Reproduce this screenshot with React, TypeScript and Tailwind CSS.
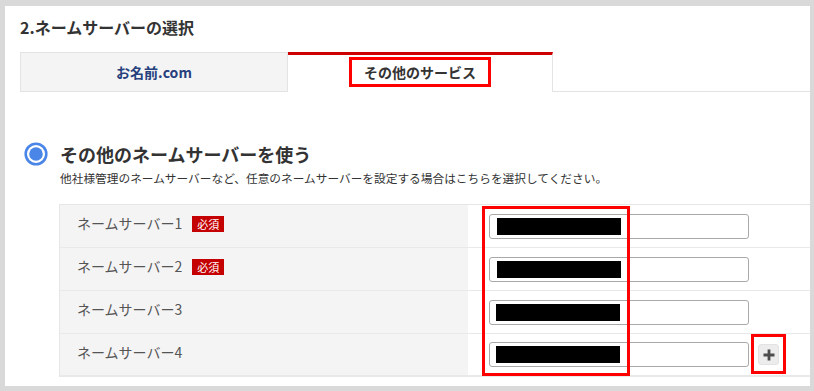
const JP = { fontFamily: '"Noto Sans CJK JP", "Noto Sans", sans-serif' };

const rows = [
  { label: 'ネームサーバー1', required: true, shift: 8 },
  { label: 'ネームサーバー2', required: true, shift: 8 },
  { label: 'ネームサーバー3', required: false, shift: 7 },
  { label: 'ネームサーバー4', required: false, shift: 7, add: true },
];

function Radio() {
  return (
    <svg width="24" height="24" viewBox="0 0 24 24" className="shrink-0">
      <circle cx="12" cy="12" r="10.3" fill="#fff" stroke="#4a86e8" strokeWidth="2.6" />
      <circle cx="12" cy="12" r="6.8" fill="#4a86e8" />
    </svg>
  );
}

function PlusMark() {
  return (
    <svg width="12" height="12" viewBox="0 0 12 12">
      <path d="M6 0.5V11.5M0.5 6H11.5" stroke="#4d4d4d" strokeWidth="2.8" />
    </svg>
  );
}

export default function App() {
  return (
    <div className="w-[814px] h-[391px] bg-[#d9d9d9] pt-[6px] pl-[5px] pr-[4px] pb-[5px]" style={JP}>
      <div className="bg-white h-full overflow-hidden">
        <div className="pl-[15px] pt-[9px] text-[16px] leading-[24px] font-bold text-[#333]">
          2.ネームサーバーの選択
        </div>

        {/* tabs */}
        <div className="flex mt-[13px] ml-[15px]">
          <div className="w-[268px] h-[40px] border border-[#e3e3e3] bg-[#f4f4f4] flex items-center justify-center text-[14px] font-bold text-[#263f7d]">
            お名前.com
          </div>
          <div className="relative w-[265px] h-[40px] border-t-[3px] border-t-[#cc0000] border-r border-[#e3e3e3] bg-white flex items-center justify-center text-[14px] font-bold text-[#333] pb-[3px]">
            その他のサービス
            <div className="absolute left-[61px] top-[2px] w-[142px] h-[30px] border-[3px] border-[#ff0000]" />
          </div>
          <div className="flex-1 border-b border-[#e3e3e3]" />
        </div>

        {/* radio heading */}
        <div className="flex items-center mt-[49px] ml-[19px] h-[26px]">
          <Radio />
          <span className="ml-[12px] text-[18px] leading-[26px] font-bold text-[#333]">
            その他のネームサーバーを使う
          </span>
        </div>
        <div className="ml-[55px] mt-[2px] text-[11.7px] leading-[18px] text-[#333]">
          他社様管理のネームサーバーなど、任意のネームサーバーを設定する場合はこちらを選択してください。
        </div>

        {/* name server table */}
        <div className="relative ml-[54px] mt-[17px] border-t border-l border-[#e6e6e6]">
          {rows.map((r, i) => (
            <div
              key={r.label}
              className={`flex h-[43px] border-[#e9e9e9] ${i === rows.length - 1 ? 'border-b-2' : 'border-b'}`}
            >
              <div className="w-[408px] bg-[#f4f4f4] pl-[17px] pt-[8px] flex items-start gap-[10px]">
                <span className="text-[14px] leading-[20px] text-[#555]">{r.label}</span>
                {r.required && (
                  <span className="mt-[3px] w-[32px] h-[16px] bg-[#c40000] text-white text-[11px] leading-[16px] text-center">
                    必須
                  </span>
                )}
              </div>
              <div className="flex-1 flex items-center pl-[21px]">
                <div className="w-[260px] h-[25px] border border-[#a9a9a9] rounded-[3px] flex items-center" style={{ paddingLeft: r.shift - 1 }}>
                  <div className="w-[124px] h-[17px] bg-black" />
                </div>
                {r.add && (
                  <div className="ml-[9px] w-[21px] h-[21px] rounded-[3px] bg-[#ececec] border border-[#e2e2e2] flex items-center justify-center">
                    <PlusMark />
                  </div>
                )}
              </div>
            </div>
          ))}
          <div className="absolute left-[422px] top-[1px] w-[148px] h-[170px] border-[3px] border-[#ff0000]" />
          <div className="absolute left-[691px] top-[129px] w-[35px] h-[40px] border-[3px] border-[#ff0000]" />
        </div>
      </div>
    </div>
  );
}
